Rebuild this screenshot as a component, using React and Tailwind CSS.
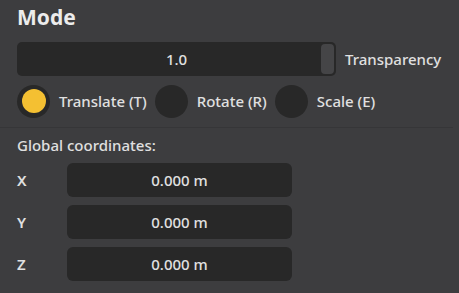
const coords = ['X', 'Y', 'Z'];

const modes = [
  { label: 'Translate (T)', active: true },
  { label: 'Rotate (R)', active: false },
  { label: 'Scale (E)', active: false },
];

export default function App() {
  return (
    <div
      className="w-[459px] h-[293px] bg-[#3d3d3f] text-[#e0e0e0] overflow-hidden"
      style={{ fontFamily: '"Noto Sans", "Open Sans", sans-serif' }}
    >
      <div className="w-[453px]">
        <div className="px-[17px] pt-[3px]">
          <h1 className="text-[21px] leading-[28px] font-bold text-[#ececec]">Mode</h1>

          {/* Transparency slider */}
          <div className="flex items-center mt-[11px] gap-[9px]">
            <div className="relative shrink-0 w-[319px] h-[34px] rounded-[5px] bg-[#282828] flex items-center justify-center">
              <span className="text-[15px] font-medium">1.0</span>
              <div className="absolute right-[2px] top-[2px] w-[13px] h-[30px] rounded-[4px] bg-[#454547]" />
            </div>
            <span className="text-[15px] font-medium whitespace-nowrap">Transparency</span>
          </div>

          {/* Mode radios */}
          <div className="flex items-center mt-[8px] h-[34px]">
            {modes.map((m) => (
              <div key={m.label} className="flex items-center mr-[8px]">
                <div className="w-[33px] h-[33px] rounded-full bg-[#282828] flex items-center justify-center">
                  {m.active && <div className="w-[24px] h-[24px] rounded-full bg-[#f4c032]" />}
                </div>
                <span className="text-[15px] font-medium ml-[9px]">{m.label}</span>
              </div>
            ))}
          </div>
        </div>

        <div className="mt-[9px] h-px bg-[#363638]" />

        <div className="px-[17px] pt-[7px]">
          <div className="text-[15px] leading-[20px] font-medium">Global coordinates:</div>
          <div className="flex flex-col gap-[8px] mt-[8px]">
            {coords.map((c) => (
              <div key={c} className="flex items-center">
                <span className="w-[50px] text-[15px] font-semibold">{c}</span>
                <div className="w-[225px] h-[34px] rounded-[6px] bg-[#282828] flex items-center justify-center text-[15px] font-medium">
                  0.000 m
                </div>
              </div>
            ))}
          </div>
        </div>
      </div>
    </div>
  );
}
